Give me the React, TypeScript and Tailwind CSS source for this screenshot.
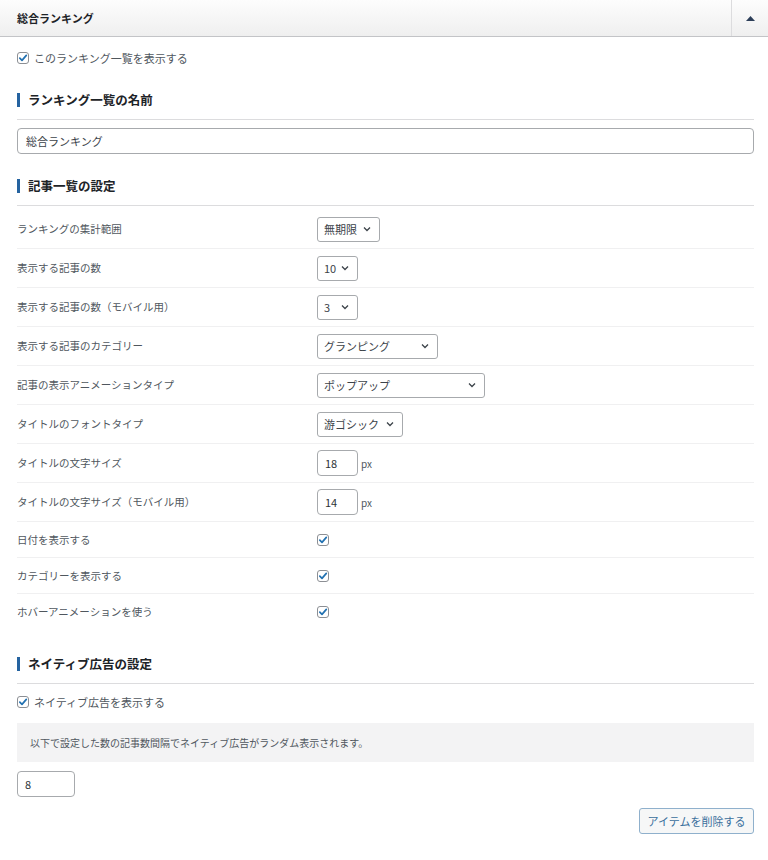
import React from "react";

const font = { fontFamily: '"Noto Sans CJK JP", "Noto Sans", sans-serif' };

function Check() {
  return (
    <span className="flex size-[12px] items-center justify-center rounded-[3px] border border-[#8c8f94] bg-white">
      <svg width="10" height="10" viewBox="0 0 10 10">
        <path d="M1.8 5.2 L4 7.4 L8.3 2.4" fill="none" stroke="#2271b1" strokeWidth="1.7" strokeLinecap="round" strokeLinejoin="round" />
      </svg>
    </span>
  );
}

function Heading({ children }: { children: React.ReactNode }) {
  return (
    <div className="border-b border-[#dcdcde] pb-[12px]">
      <div className="flex h-[14px] items-center gap-[8px]">
        <span className="h-[14px] w-[3px] bg-[#2563a0]" />
        <span className="text-[12.5px] font-bold text-[#1d2327]">{children}</span>
      </div>
    </div>
  );
}

function Select({ value, w }: { value: string; w: string }) {
  return (
    <div className={`flex h-[25px] items-center justify-between rounded-[3px] border border-[#a7aaad] bg-white pl-[6px] pr-[8px] text-[11px] text-[#3c434a] ${w}`}>
      <span>{value}</span>
      <svg width="8" height="6" viewBox="0 0 8 6">
        <path d="M1 1.5 L4 4.5 L7 1.5" fill="none" stroke="#3c434a" strokeWidth="1.3" />
      </svg>
    </div>
  );
}

function NumInput({ value }: { value: string }) {
  return (
    <div className="flex items-center gap-[3px]">
      <div className="flex h-[26px] w-[41px] items-center rounded-[4px] border border-[#a7aaad] bg-white pl-[7px] text-[11px] text-[#2c3338]">{value}</div>
      <span className="text-[10px] text-[#50575e]">px</span>
    </div>
  );
}

const rows: { label: string; ctrl: React.ReactNode }[] = [
  { label: "ランキングの集計範囲", ctrl: <Select value="無期限" w="w-[63px]" /> },
  { label: "表示する記事の数", ctrl: <Select value="10" w="w-[41px]" /> },
  { label: "表示する記事の数（モバイル用）", ctrl: <Select value="3" w="w-[41px]" /> },
  { label: "表示する記事のカテゴリー", ctrl: <Select value="グランピング" w="w-[121px]" /> },
  { label: "記事の表示アニメーションタイプ", ctrl: <Select value="ポップアップ" w="w-[168px]" /> },
  { label: "タイトルのフォントタイプ", ctrl: <Select value="游ゴシック" w="w-[86px]" /> },
  { label: "タイトルの文字サイズ", ctrl: <NumInput value="18" /> },
  { label: "タイトルの文字サイズ（モバイル用）", ctrl: <NumInput value="14" /> },
];

const checks = ["日付を表示する", "カテゴリーを表示する", "ホバーアニメーションを使う"];

export default function App() {
  return (
    <div className="min-h-[860px] w-[768px] bg-white" style={font}>
      <header className="flex h-[37px] border-b border-[#c3c4c7] bg-gradient-to-b from-[#fdfdfd] to-[#efefef]">
        <div className="flex flex-1 items-center pl-[17px] text-[11px] font-bold text-[#1d2327]">総合ランキング</div>
        <div className="flex w-[37px] items-center justify-center border-l border-[#dcdcde]">
          <svg width="9" height="5" viewBox="0 0 9 5">
            <path d="M0 5 L4.5 0 L9 5 Z" fill="#2c3e58" />
          </svg>
        </div>
      </header>

      <div className="pl-[17px] pr-[14px]">
        <label className="mt-[15px] flex h-[12px] items-center gap-[5px] text-[11px] text-[#50575e]">
          <Check />
          このランキング一覧を表示する
        </label>

        <div className="mt-[29px]">
          <Heading>ランキング一覧の名前</Heading>
        </div>
        <div className="mt-[8px] flex h-[26px] items-center rounded-[4px] border border-[#a7aaad] pl-[8px] text-[11px] text-[#3c434a]">総合ランキング</div>

        <div className="mt-[25px]">
          <Heading>記事一覧の設定</Heading>
        </div>

        <div className="pt-[4px]">
          {rows.map((r) => (
            <div key={r.label} className="grid h-[39px] grid-cols-[300px_1fr] items-center border-b border-[#f0f0f1]">
              <span className="text-[10.5px] text-[#50575e]">{r.label}</span>
              {r.ctrl}
            </div>
          ))}
          {checks.map((c, i) => (
            <div key={c} className={`grid h-[36px] grid-cols-[300px_1fr] items-center ${i < checks.length - 1 ? "border-b border-[#f0f0f1]" : ""}`}>
              <span className="text-[10.5px] text-[#50575e]">{c}</span>
              <Check />
            </div>
          ))}
        </div>

        <div className="mt-[27px]">
          <Heading>ネイティブ広告の設定</Heading>
        </div>

        <label className="mt-[12px] flex h-[12px] items-center gap-[5px] text-[11px] text-[#50575e]">
          <Check />
          ネイティブ広告を表示する
        </label>

        <div className="mt-[15px] flex h-[39px] items-center bg-[#f3f3f4] pl-[13px] text-[10px] text-[#50575e]">
          以下で設定した数の記事数間隔でネイティブ広告がランダム表示されます。
        </div>

        <div className="mt-[9px] flex h-[26px] w-[58px] items-center rounded-[4px] border border-[#a7aaad] pl-[7px] text-[11px] text-[#2c3338]">8</div>

        <div className="mt-[11px] flex justify-end">
          <button className="flex h-[26px] w-[115px] items-center justify-center rounded-[3px] border border-[#8fb0cc] bg-[#f6f7f7] text-[11px] text-[#3a6f9c]">
            アイテムを削除する
          </button>
        </div>
      </div>
    </div>
  );
}
